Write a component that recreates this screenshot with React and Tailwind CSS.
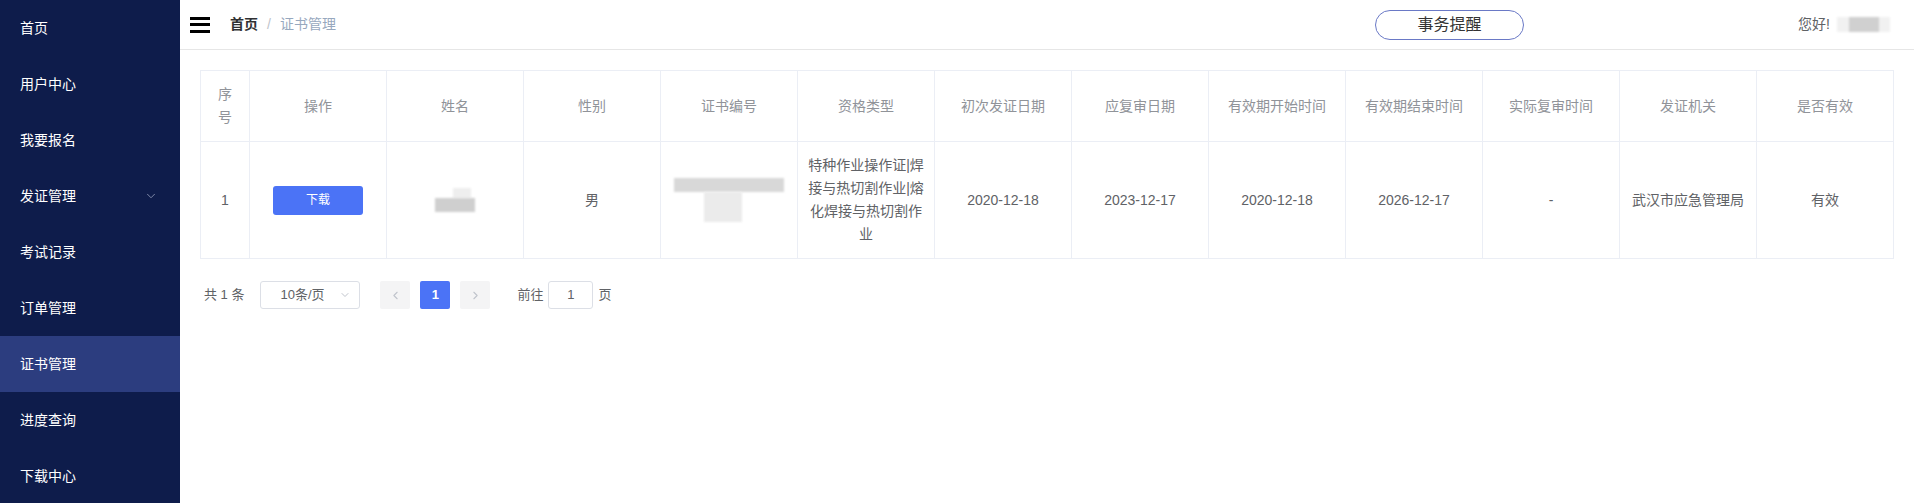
import { ChevronDown, ChevronLeft, ChevronRight } from "lucide-react";

const menu = ["首页", "用户中心", "我要报名", "发证管理", "考试记录", "订单管理", "证书管理", "进度查询", "下载中心"];

const headers = [
  "序号",
  "操作",
  "姓名",
  "性别",
  "证书编号",
  "资格类型",
  "初次发证日期",
  "应复审日期",
  "有效期开始时间",
  "有效期结束时间",
  "实际复审时间",
  "发证机关",
  "是否有效",
];

function Blur({ className }) {
  return <div className={`blur-[1px] ${className}`} />;
}

export default function App() {
  return (
    <div
      className="flex h-[503px] w-full overflow-hidden bg-white text-[14px]"
      style={{ fontFamily: '"Liberation Sans", "Noto Sans CJK SC", sans-serif' }}
    >
      {/* sidebar */}
      <aside className="w-[180px] shrink-0 bg-[#0e1c4b]">
        {menu.map((m) => (
          <div
            key={m}
            className={`flex h-[56px] items-center justify-between pl-[20px] pr-[22px] text-[14px] text-white ${
              m === "证书管理" ? "bg-[#2c3d7f]" : ""
            }`}
          >
            <span>{m}</span>
            {m === "发证管理" && <ChevronDown className="h-[14px] w-[14px] text-[#8d97b5]" strokeWidth={1.5} />}
          </div>
        ))}
      </aside>

      {/* main */}
      <div className="flex min-w-0 flex-1 flex-col">
        <header className="flex h-[50px] shrink-0 items-center border-b border-[#e6e6e6] pl-[10px] pr-[24px]">
          <div className="flex h-[16px] w-[20px] flex-col justify-between">
            <span className="h-[3px] bg-black" />
            <span className="h-[3px] bg-black" />
            <span className="h-[3px] bg-black" />
          </div>
          <div className="ml-[20px] flex items-center text-[14px]">
            <span className="font-bold text-[#303133]">首页</span>
            <span className="mx-[9px] text-[#c0c4cc]">/</span>
            <span className="text-[#97a8be]">证书管理</span>
          </div>
          <div className="ml-auto flex items-center">
            <button className="h-[30px] w-[149px] rounded-full border border-[#6a79c6] text-[16px] text-[#333]">
              事务提醒
            </button>
            <div className="ml-[274px] flex items-center text-[14px] text-[#606266]">
              <span>您好!</span>
              <div className="ml-[7px] flex h-[15px] w-[53px] items-center justify-center bg-[#f1f1f1] blur-[1px]">
                <div className="h-[15px] w-[30px] bg-[#d0d0d0]" />
              </div>
            </div>
          </div>
        </header>

        <div className="p-[20px]">
          <table className="w-full table-fixed border-collapse border border-[#ebeef5] text-center">
            <colgroup>
              <col className="w-[49px]" />
              {headers.slice(1).map((h) => (
                <col key={h} />
              ))}
            </colgroup>
            <thead>
              <tr>
                {headers.map((h, i) => (
                  <th
                    key={h}
                    className="border border-[#ebeef5] px-[10px] py-[12px] text-[14px] font-normal leading-[23px] text-[#909399]"
                  >
                    {i === 0 ? (
                      <>
                        序<br />号
                      </>
                    ) : (
                      h
                    )}
                  </th>
                ))}
              </tr>
            </thead>
            <tbody className="text-[14px] leading-[23px] text-[#606266]">
              <tr>
                <td className="border border-[#ebeef5] py-[12px]">1</td>
                <td className="border border-[#ebeef5] py-[12px]">
                  <button className="h-[29px] w-[90px] rounded-[3px] bg-[#4b73f6] text-[12px] text-white">下载</button>
                </td>
                <td className="border border-[#ebeef5] py-[12px]">
                  <div className="flex flex-col items-center">
                    <Blur className="ml-[14px] h-[10px] w-[18px] bg-[#eeeeee]" />
                    <Blur className="h-[14px] w-[40px] bg-[#cfcfcf]" />
                  </div>
                </td>
                <td className="border border-[#ebeef5] py-[12px]">男</td>
                <td className="border border-[#ebeef5] py-[12px]">
                  <div className="flex flex-col items-center">
                    <Blur className="h-[14px] w-[110px] bg-[#d8d8d8]" />
                    <Blur className="mr-[12px] h-[30px] w-[38px] bg-[#ebebeb]" />
                  </div>
                </td>
                <td className="border border-[#ebeef5] px-[10px] py-[12px]">
                  特种作业操作证|焊
                  <br />
                  接与热切割作业|熔
                  <br />
                  化焊接与热切割作
                  <br />
                  业
                </td>
                <td className="border border-[#ebeef5] py-[12px]">2020-12-18</td>
                <td className="border border-[#ebeef5] py-[12px]">2023-12-17</td>
                <td className="border border-[#ebeef5] py-[12px]">2020-12-18</td>
                <td className="border border-[#ebeef5] py-[12px]">2026-12-17</td>
                <td className="border border-[#ebeef5] py-[12px]">-</td>
                <td className="border border-[#ebeef5] py-[12px]">武汉市应急管理局</td>
                <td className="border border-[#ebeef5] py-[12px]">有效</td>
              </tr>
            </tbody>
          </table>

          {/* pagination */}
          <div className="mt-[22px] flex items-center text-[13px] text-[#606266]">
            <span className="ml-[4px]">共 1 条</span>
            <div className="ml-[16px] flex h-[28px] w-[100px] items-center justify-between rounded-[3px] border border-[#dcdfe6] pl-[19px] pr-[8px]">
              <span>10条/页</span>
              <ChevronDown className="h-[12px] w-[12px] text-[#c0c4cc]" />
            </div>
            <div className="ml-[20px] flex h-[28px] w-[30px] items-center justify-center rounded-[2px] bg-[#f4f4f5] text-[#c0c4cc]">
              <ChevronLeft className="h-[13px] w-[13px]" />
            </div>
            <div className="ml-[10px] flex h-[28px] w-[30px] items-center justify-center rounded-[2px] bg-[#4b73f6] font-bold text-white">
              1
            </div>
            <div className="ml-[10px] flex h-[28px] w-[30px] items-center justify-center rounded-[2px] bg-[#f4f4f5] text-[#c0c4cc]">
              <ChevronRight className="h-[13px] w-[13px]" />
            </div>
            <span className="ml-[27px]">前往</span>
            <div className="ml-[5px] flex h-[28px] w-[45px] items-center justify-center rounded-[3px] border border-[#dcdfe6]">
              1
            </div>
            <span className="ml-[5px]">页</span>
          </div>
        </div>
      </div>
    </div>
  );
}
